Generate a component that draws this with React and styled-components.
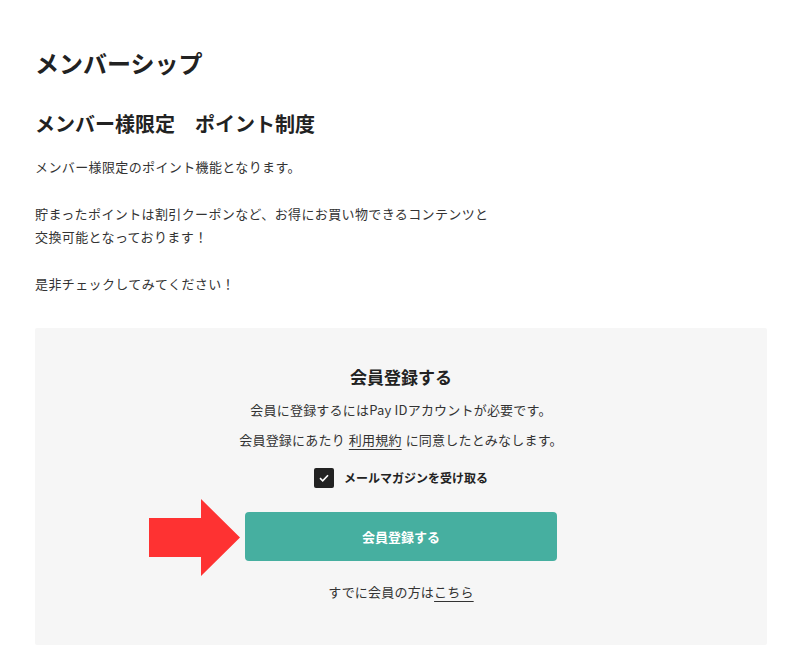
import styled, { createGlobalStyle } from "styled-components"

const GlobalStyle = createGlobalStyle`
  body {
    margin: 0;
    background: #fff;
    font-family: "Noto Sans CJK JP", "Noto Sans", sans-serif;
    color: #333;
  }
`

const Page = styled.div`
  width: 732px;
  padding: 46px 33px 14px 35px;
`

const Title = styled.h1`
  margin: 0;
  font-size: 24px;
  line-height: 34px;
  font-weight: 700;
  color: #222;
`

const SubTitle = styled.h2`
  margin: 30px 0 0;
  font-size: 20px;
  line-height: 28px;
  font-weight: 700;
  color: #222;
`

const Lead = styled.p`
  margin: 17px 0 0;
  font-size: 13px;
  line-height: 23.4px;
  letter-spacing: 0.38px;
`

const Panel = styled.section`
  margin-top: 33px;
  background: #f6f6f6;
  border-radius: 2px;
  padding: 37px 0 43px;
  display: flex;
  flex-direction: column;
  align-items: center;
`

const PanelTitle = styled.h3`
  margin: 0 0 6px;
  font-size: 17px;
  line-height: 24px;
  font-weight: 700;
  color: #222;
`

const Note = styled.p`
  margin: 0;
  font-size: 13px;
  line-height: 30px;
  letter-spacing: 0.2px;
`

const TextLink = styled.a`
  color: #333;
  text-decoration: underline;
  text-underline-offset: 4px;
  text-decoration-thickness: 1px;
  margin: ${(p) => (p.$spaced ? "0 4px" : "0")};
`

const CheckRow = styled.label`
  margin-top: 13px;
  display: flex;
  align-items: center;
  gap: 10px;
  font-size: 12px;
  line-height: 20px;
  font-weight: 700;
  color: #222;
  cursor: pointer;
`

const CheckBox = styled.span`
  width: 20px;
  height: 20px;
  border-radius: 2px;
  background: #222;
  display: flex;
  align-items: center;
  justify-content: center;
`

const ButtonWrap = styled.div`
  position: relative;
  margin-top: 24px;
`

const Pointer = styled.svg`
  position: absolute;
  left: -96px;
  top: -13px;
`

const Button = styled.button`
  width: 312px;
  height: 49px;
  border: none;
  border-radius: 4px;
  background: #46afa0;
  color: #fff;
  font-family: inherit;
  font-size: 13px;
  font-weight: 700;
  cursor: pointer;
`

const Login = styled.p`
  margin: 21px 0 0;
  font-size: 13px;
  line-height: 20px;
  letter-spacing: 0.2px;
`

const App = () => {
  return (
    <>
      <GlobalStyle />
      <Page>
        <Title>メンバーシップ</Title>
        <SubTitle>メンバー様限定　ポイント制度</SubTitle>
        <Lead>
          メンバー様限定のポイント機能となります。
          <br />
          <br />
          貯まったポイントは割引クーポンなど、お得にお買い物できるコンテンツと
          <br />
          交換可能となっております！
          <br />
          <br />
          是非チェックしてみてください！
        </Lead>
        <Panel>
          <PanelTitle>会員登録する</PanelTitle>
          <Note>会員に登録するにはPay IDアカウントが必要です。</Note>
          <Note>
            会員登録にあたり<TextLink href="#" $spaced>利用規約</TextLink>に同意したとみなします。
          </Note>
          <CheckRow>
            <CheckBox>
              <svg width="10" height="8" viewBox="0 0 10 8">
                <path d="M1 4.2 L3.7 6.8 L9 1.2" fill="none" stroke="#fff" strokeWidth="1.6" />
              </svg>
            </CheckBox>
            メールマガジンを受け取る
          </CheckRow>
          <ButtonWrap>
            <Pointer width="91" height="77" viewBox="0 0 91 77">
              <polygon points="0,19 52,19 52,0 91,38.5 52,77 52,58 0,58" fill="#fe3232" />
            </Pointer>
            <Button>会員登録する</Button>
          </ButtonWrap>
          <Login>
            すでに会員の方は<TextLink href="#">こちら</TextLink>
          </Login>
        </Panel>
      </Page>
    </>
  )
}

export default App
